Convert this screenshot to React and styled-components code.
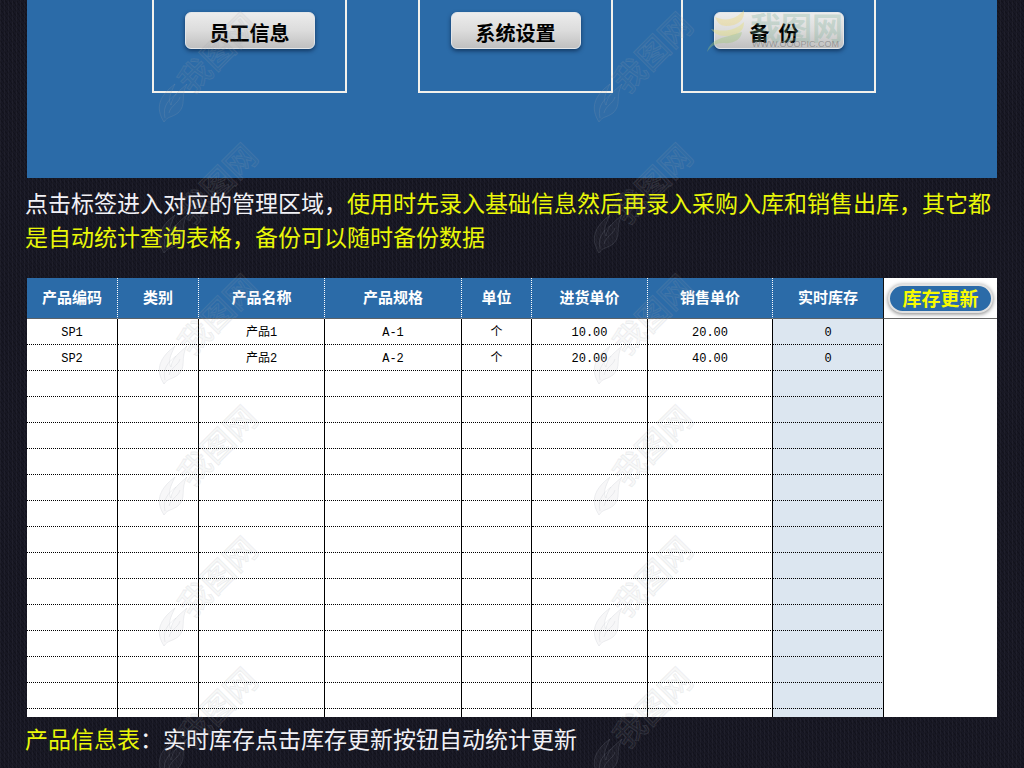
import styled, { createGlobalStyle } from "styled-components"

const columns = [
    { title: "产品编码", width: 91 },
    { title: "类别", width: 81 },
    { title: "产品名称", width: 126 },
    { title: "产品规格", width: 137 },
    { title: "单位", width: 70 },
    { title: "进货单价", width: 116 },
    { title: "销售单价", width: 125 },
    { title: "实时库存", width: 111 },
]

const products = [
    ["SP1", "", "产品1", "A-1", "个", "10.00", "20.00", "0"],
    ["SP2", "", "产品2", "A-2", "个", "20.00", "40.00", "0"],
]

const blank = ["", "", "", "", "", "", "", ""]
const rows = [...products, ...Array.from({ length: 13 }, () => blank)]

const marks = Array.from({ length: 6 })

export default function App() {
    return (
        <>
            <GlobalStyle />
            <Page>
                <MenuPanel>
                    <MenuBox><MenuButton type="button">员工信息</MenuButton></MenuBox>
                    <MenuBox><MenuButton type="button">系统设置</MenuButton></MenuBox>
                    <MenuBox>
                        <MenuButton type="button">备&nbsp;&nbsp;份&nbsp;&nbsp;</MenuButton>
                        <SiteLogo />
                    </MenuBox>
                </MenuPanel>

                <Caption>
                    点击标签进入对应的管理区域，<Mark>使用时先录入基础信息然后再录入采购入库和销售出库，其它都是自动统计查询表格，备份可以随时备份数据</Mark>
                </Caption>

                <Sheet>
                    <colgroup>
                        {columns.map((col) => <Col key={col.title} $width={col.width} />)}
                        <col />
                    </colgroup>
                    <thead>
                        <tr>
                            {columns.map((col) => <HeadCell key={col.title} scope="col">{col.title}</HeadCell>)}
                            <ActionCell><UpdateButton type="button">库存更新</UpdateButton></ActionCell>
                        </tr>
                    </thead>
                    <tbody>
                        {rows.map((row, i) => (
                            <tr key={i}>
                                {row.map((value, j) => <Cell key={j} $stock={j === 7}>{value}</Cell>)}
                                <td></td>
                            </tr>
                        ))}
                        <tr>
                            {blank.map((value, j) => <LastCell key={j} $stock={j === 7} />)}
                            <td></td>
                        </tr>
                    </tbody>
                </Sheet>

                <Caption $last>
                    <Mark>产品信息表</Mark>：实时库存点击库存更新按钮自动统计更新
                </Caption>

                <Watermarks aria-hidden="true">
                    {[0, 1].map((col) => (
                        <WatermarkColumn key={col}>
                            {marks.map((_, i) => <Watermark key={i} />)}
                        </WatermarkColumn>
                    ))}
                </Watermarks>
            </Page>
        </>
    )
}

function Watermark() {
    return (
        <WatermarkSvg width="110" height="131" viewBox="0 0 110 131">
            <g fill="#8b8f96" fillOpacity="0.07" stroke="#a3a8b0" strokeOpacity="0.17" strokeWidth="1">
                <path d="M6 114 C-3 100 1 88 17 76 C12 86 10 92 13 97 C14 88 21 83 29 76 C22 88 29 97 20 105 C13 110 10 108 6 114 Z" />
                <path d="M7 110 C4 97 12 91 18 86 M11 105 C13 97 20 96 22 89" fill="none" />
                <text transform="translate(34 87) rotate(-45)" fontSize="32" fontWeight="500">我图网</text>
            </g>
        </WatermarkSvg>
    )
}

function SiteLogo() {
    return (
        <LogoSvg width="150" height="46" viewBox="0 0 150 46" aria-hidden="true">
            <path d="M8 8 C20 13 29 10 37 1 C38 11 31 17 19 17 C13 17 10 13 8 8 Z" fill="#eed779" fillOpacity="0.4" />
            <path d="M4 20 C17 23 28 22 37 13 C37 23 30 27 18 27 C11 27 7 24 4 20 Z" fill="#e3df76" fillOpacity="0.4" />
            <path d="M0 43 C4 29 17 29 35 23 C34 31 26 35 16 34 C9 34 4 37 0 43 Z" fill="#9fc67b" fillOpacity="0.4" />
            <text x="43" y="30" fontSize="31" fontWeight="700" fill="#78ad94" fillOpacity="0.3">我图网</text>
            <text x="45" y="38" fontSize="9" className="address" fill="#777" fillOpacity="0.6">WWW.OOOPIC.COM</text>
        </LogoSvg>
    )
}

const GlobalStyle = createGlobalStyle`
    * {
        box-sizing: border-box;
    }

    body {
        margin: 0;
        background-color: #171722;
        font-family: "Noto Sans CJK SC", "Noto Sans", sans-serif;
    }

    button {
        font-family: inherit;
        cursor: pointer;
    }
`

const Page = styled.main`
    position: relative;
    min-height: 100vh;
    padding: 0 27px 0 25px;
    overflow: hidden;
    background-color: #181824;
    background-image:
        repeating-linear-gradient(90deg, rgba(255, 255, 255, 0.03) 0 1px, transparent 1px 4px),
        repeating-linear-gradient(55deg, rgba(0, 0, 0, 0.2) 0 1px, transparent 1px 3px);
`

const MenuPanel = styled.nav`
    display: grid;
    grid-template-columns: 266px 263px 195px;
    justify-content: center;
    height: 178px;
    margin-left: 2px;
    padding-left: 4px;
    background-color: #2b6ba8;
`

const MenuBox = styled.div`
    position: relative;
    display: flex;
    justify-content: center;
    align-items: flex-start;
    width: 195px;
    height: 93px;
    padding-top: 12px;
    border: 2px solid #f3f1ec;
    border-top: none;
`

const MenuButton = styled.button`
    width: 130px;
    height: 37px;
    padding: 4px 0 0;
    border: 1px solid #e3e6e9;
    border-radius: 6px;
    background: linear-gradient(#ececec, #dcdcdc 50%, #c0c0c0);
    box-shadow: 0 2px 4px rgba(0, 20, 50, 0.6);
    color: #000;
    font-size: 20px;
    line-height: 30px;
    font-weight: 700;
`

const LogoSvg = styled.svg`
    position: absolute;
    top: 9px;
    left: 24px;
    pointer-events: none;

    .address {
        font-family: "Liberation Sans", sans-serif;
    }
`

const Caption = styled.p`
    margin: ${(props) => (props.$last ? "4px 0 0" : "7px 0 25px")};
    color: #f1f1f6;
    font-size: 23px;
    line-height: 34px;
`

const Mark = styled.span`
    color: #e9f708;
`

const Sheet = styled.table`
    width: calc(100% - 2px);
    margin-left: 2px;
    border-collapse: separate;
    border-spacing: 0;
    table-layout: fixed;
    background-color: #fff;
`

const Col = styled.col`
    width: ${(props) => props.$width}px;
`

const HeadCell = styled.th`
    height: 41px;
    padding: 0 0 2px;
    border-right: 1px dotted #fff;
    border-bottom: 1px solid #5b6268;
    background-color: #2b6ba8;
    color: #fff;
    font-size: 15px;
    line-height: 20px;
    font-weight: 700;

    &:nth-child(8) {
        border-right: 1px solid #111;
    }
`

const ActionCell = styled.td`
    height: 41px;
    padding: 0;
    border-bottom: 1px solid #666;
    text-align: center;
`

const UpdateButton = styled.button`
    width: 105px;
    height: 29px;
    padding: 0;
    border: 2px solid #e2e2e2;
    border-radius: 15px;
    background-color: #2b6ba8;
    box-shadow: 0 1px 4px rgba(0, 0, 0, 0.5);
    color: #f8fb00;
    font-size: 19px;
    line-height: 24px;
    font-weight: 700;
    vertical-align: middle;
`

const Cell = styled.td`
    height: 26px;
    padding: 0;
    border-right: 1px solid #000;
    border-bottom: 1px dotted #000;
    background-color: ${(props) => (props.$stock ? "#dce6f0" : "#fff")};
    color: #000;
    font-family: "Liberation Mono", "Noto Sans CJK SC", monospace;
    font-size: 12px;
    line-height: 22px;
    text-align: center;
    vertical-align: bottom;
`

const LastCell = styled(Cell)`
    height: 8px;
    border-bottom: none;
`

// laid over the whole page, lets clicks through
const Watermarks = styled.div`
    position: absolute;
    inset: 0 0 0 158px;
    display: flex;
    gap: 325px;
    padding-top: 8px;
    overflow: hidden;
    pointer-events: none;
`

const WatermarkColumn = styled.div`
    display: flex;
    flex-direction: column;
    flex-shrink: 0;
`

const WatermarkSvg = styled.svg`
    flex-shrink: 0;
    overflow: visible;
`
